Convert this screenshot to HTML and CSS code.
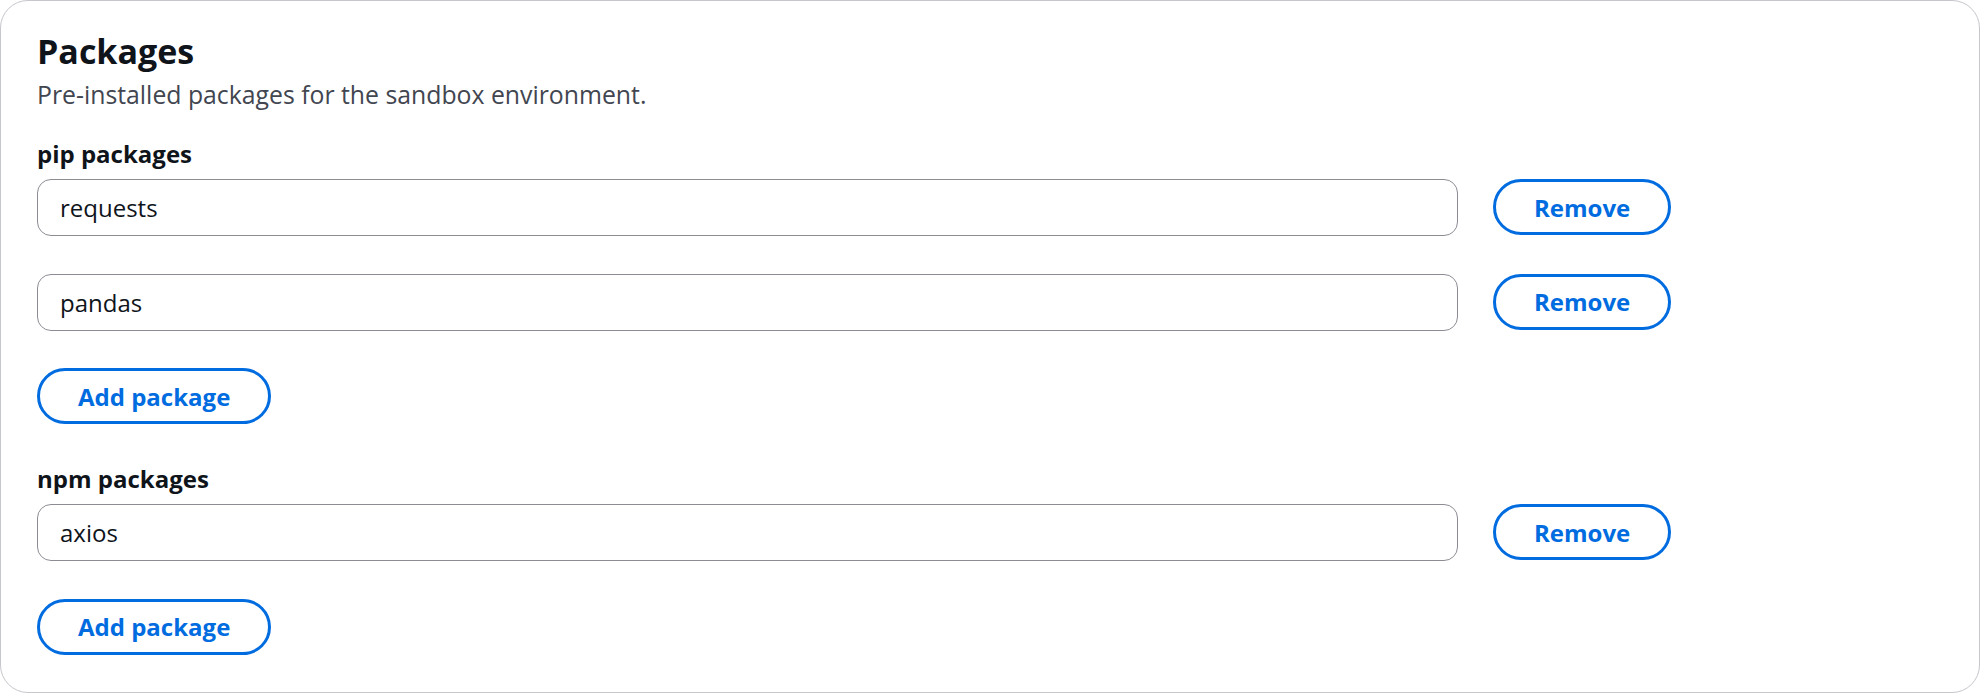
FILE: index.html
```html
<!DOCTYPE html>
<html lang="en">
<head>
<meta charset="utf-8">
<title>Packages</title>
<link rel="stylesheet" href="styles.css">
</head>
<body>
<section class="card">
  <h2 class="title">Packages</h2>
  <p class="desc">Pre-installed packages for the sandbox environment.</p>

  <div class="group">
    <div class="label">pip packages</div>
    <div class="rows">
      <div class="row">
        <div class="input">requests</div>
        <button class="btn">Remove</button>
      </div>
      <div class="row">
        <div class="input">pandas</div>
        <button class="btn">Remove</button>
      </div>
      <div class="row">
        <button class="btn">Add package</button>
      </div>
    </div>
  </div>

  <div class="group">
    <div class="label">npm packages</div>
    <div class="rows">
      <div class="row">
        <div class="input">axios</div>
        <button class="btn">Remove</button>
      </div>
      <div class="row">
        <button class="btn">Add package</button>
      </div>
    </div>
  </div>
</section>
</body>
</html>
```

FILE: styles.css
```css
html, body {
  margin: 0;
  padding: 0;
  background: #ffffff;
}

body {
  font-family: "Open Sans", "Noto Sans", sans-serif;
  color: #0f141a;
}

.card {
  box-sizing: border-box;
  width: 1980px;
  height: 693px;
  border: 1px solid #c6c6cd;
  border-radius: 28px;
  padding: 29px 36px 0 36px;
  background: #ffffff;
}

.title {
  margin: 0;
  font-size: 34px;
  line-height: 42px;
  font-weight: 700;
  color: #0f141a;
}

.desc {
  margin: 5px 0 0 0;
  font-size: 24.8px;
  line-height: 35px;
  color: #424650;
}

.group {
  margin-top: 24px;
}

.group + .group {
  margin-top: 37px;
}

.label {
  font-size: 24px;
  line-height: 35px;
  font-weight: 700;
  color: #0f141a;
}

.rows {
  margin-top: 8px;
  display: flex;
  flex-direction: column;
  gap: 37.5px;
}

.row {
  display: flex;
  align-items: flex-start;
  gap: 35px;
}

.input {
  box-sizing: border-box;
  width: 1421px;
  height: 57px;
  border: 1px solid #8c8c94;
  border-radius: 14px;
  padding: 0 22px;
  display: flex;
  align-items: center;
  font-size: 24px;
  color: #0f141a;
}

.btn {
  box-sizing: border-box;
  height: 56px;
  border: 3px solid #006ce0;
  border-radius: 28px;
  background: #ffffff;
  color: #006ce0;
  font-family: "Open Sans", "Noto Sans", sans-serif;
  font-size: 24px;
  font-weight: 700;
  padding: 0 38px;
  display: flex;
  align-items: center;
  justify-content: center;
}
```
